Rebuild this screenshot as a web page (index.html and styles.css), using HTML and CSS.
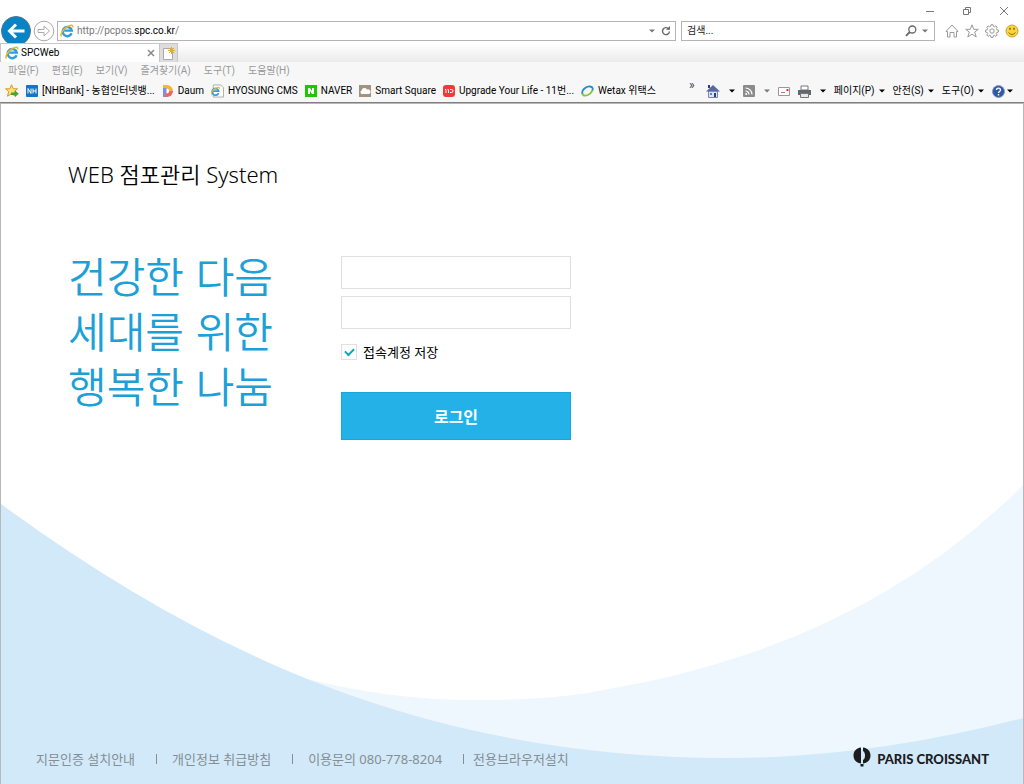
FILE: index.html
```html
<!DOCTYPE html>
<html lang="ko">
<head>
<meta charset="utf-8">
<title>SPCWeb</title>
<link rel="stylesheet" href="styles.css">
</head>
<body>
<svg class="defs" aria-hidden="true">
  <symbol id="ie" viewBox="0 0 14 14">
    <path d="M11.6 9.2A4.6 4.6 0 1 1 11.8 6.6H4.2" fill="none" stroke="#2f9fdc" stroke-width="2.4"/>
    <path d="M1.6 12.6C-.6 10.2 4 4.2 8.2 2.1c3.2-1.600 5-1.200 4.400 1.400" fill="none" stroke="#f2b71f" stroke-width="1.500"/>
  </symbol>
  <symbol id="caret" viewBox="0 0 6 4"><path d="M0 .5h6L3 3.500z" fill="currentColor"/></symbol>
</svg>

<header class="browser">
  <div class="titlebar">
    <button class="plain" aria-label="최소화"><svg width="10" height="10"><path d="M1 5.500h8" stroke="#777"/></svg></button>
    <button class="plain" aria-label="이전 크기로"><svg width="10" height="10" fill="none" stroke="#777"><path d="M1.500 3.500h5v5h-5zM3.500 3.500v-2h5v5h-2"/></svg></button>
    <button class="plain" aria-label="닫기"><svg width="10" height="10"><path d="M1 1l8 8M9 1l-8 8" stroke="#777"/></svg></button>
  </div>
  <div class="navrow">
    <button class="plain back" aria-label="뒤로"><svg width="30" height="30" viewBox="0 0 30 30"><circle cx="15" cy="15" r="14.500" fill="#0783c6" stroke="#55748a"/><path d="M23.500 15H9M15 8.500L8.500 15l6.500 6.500" fill="none" stroke="#fff" stroke-width="3"/></svg></button>
    <button class="plain" aria-label="앞으로"><svg width="22" height="22" viewBox="0 0 22 22" fill="#fff" stroke="#aaa"><circle cx="11" cy="11" r="9.800"/><path d="M5 9.500h6V6l5.500 5-5.500 5v-3.500H5z"/></svg></button>
    <div class="address">
      <svg width="14" height="14"><use href="#ie"/></svg>
      <span class="url">http://pcpos.<b>spc.co.kr</b>/</span>
      <button class="plain dim" aria-label="주소 목록"><svg width="6" height="4"><use href="#caret"/></svg></button>
      <button class="plain" aria-label="새로 고침"><svg width="10" height="10" viewBox="0 0 10 10"><path d="M7.800 3A3.500 3.500 0 1 0 8.500 5.500" fill="none" stroke="#666" stroke-width="1.400"/><path d="M5 3.800h4V0z" fill="#666"/></svg></button>
    </div>
    <div class="search">
      <input type="text" aria-label="검색" placeholder="검색...">
      <button class="plain" aria-label="찾기"><svg width="12" height="12" viewBox="0 0 12 12" fill="none" stroke="#666"><circle cx="7.300" cy="4.500" r="3.500" stroke-width="1.300"/><path d="M4.800 7L1 10.800" stroke-width="1.800"/></svg></button>
      <button class="plain dim" aria-label="검색 옵션"><svg width="6" height="4"><use href="#caret"/></svg></button>
    </div>
    <div class="tools">
      <button class="plain" aria-label="홈"><svg width="14" height="14" viewBox="0 0 14 14" fill="none" stroke="#999"><path d="M1 7.500L7 1l6 6.500h-1.500V13H9V8.500H5V13H2.500V7.500z"/></svg></button>
      <button class="plain" aria-label="즐겨찾기"><svg width="14" height="14" viewBox="0 0 14 14" fill="none" stroke="#999"><path d="M7 .8l1.700 4.500h4.600L9.700 8.100l1.500 4.900L7 10.200 2.800 13l1.500-4.900L.7 5.300h4.600z"/></svg></button>
      <button class="plain" aria-label="설정"><svg width="14" height="14" viewBox="0 0 14 14" fill="none" stroke="#999"><path d="M6 .7h2l.4 1.700 1 .4 1.500-.9 1.300 1.300-.9 1.500.4 1 1.700.4v2l-1.700.4-.4 1 .9 1.500-1.300 1.300-1.500-.9-1 .4-.4 1.600H6l-.4-1.600-1-.4-1.500.9L1.800 11l.9-1.500-.4-1L.6 8.100v-2l1.700-.4.4-1-.9-1.500 1.300-1.300 1.500.9 1-.4z"/><circle cx="7" cy="7" r="2.200"/></svg></button>
      <button class="plain" aria-label="의견 보내기"><svg width="14" height="14" viewBox="0 0 14 14"><circle cx="7" cy="7" r="6" fill="#fbd43c" stroke="#c9a43a"/><path d="M5 3.800v2M9 3.800v2" stroke="#655018" stroke-width="1.300"/><path d="M3.500 8.500q3.500 4 7 0" fill="none" stroke="#8a6c18"/></svg></button>
    </div>
  </div>
  <div class="tabs">
    <div class="tab">
      <svg width="14" height="14"><use href="#ie"/></svg>
      <span>SPCWeb</span>
      <button class="plain" aria-label="탭 닫기"><svg width="8" height="8"><path d="M1 1l6 6M7 1L1 7" stroke="#888" stroke-width="1.500"/></svg></button>
    </div>
    <button class="plain newtab" aria-label="새 탭"><svg width="13" height="13" viewBox="0 0 13 13"><path d="M1.500 1.500h9v11h-9z" fill="#fff" stroke="#aaa"/><path d="M9.500 0v7M6 3.500h7M7 1l5 5M12 1L7 6" stroke="#eda52c"/></svg></button>
  </div>
  <nav class="menu" aria-label="메뉴">
    <button class="plain">파일(F)</button><button class="plain">편집(E)</button><button class="plain">보기(V)</button><button class="plain">즐겨찾기(A)</button><button class="plain">도구(T)</button><button class="plain">도움말(H)</button>
  </nav>
  <div class="bar">
    <nav class="favorites" aria-label="즐겨찾기 모음">
      <button class="plain" aria-label="즐겨찾기에 추가"><svg width="14" height="14" viewBox="0 0 14 14"><path d="M6.500.8l1.800 4h4.200L9.300 7.600l1.200 4.600-4-2.400-4 2.400 1.200-4.600L.6 4.800h4.200z" fill="#ffe27a" stroke="#d29a21"/><path d="M6 8.500h4V6.500l3.800 3.300-3.800 3.300v-2H6z" fill="#48a52b"/></svg></button>
      <a href="#"><svg width="12" height="12" viewBox="0 0 12 12"><rect width="12" height="12" rx="1" fill="#1574c4"/><path d="M2 8.500v-5l3 5v-5M7 3.500v5M10 3.500v5M7 6h3" fill="none" stroke="#fff"/></svg>[NHBank] - 농협인터넷뱅...</a>
      <a href="#"><svg width="12" height="12" viewBox="0 0 12 12"><path d="M1 0h4v12H1z" fill="#7b8cf2"/><path d="M5 0a6 6 0 0 1 6 6H7.500L4 3H1V0z" fill="#f4b63a"/><path d="M11 6a6 6 0 0 1-6 6H3V9l4.500-3z" fill="#f0655c"/><path d="M4.500 3.500a2.500 2.500 0 0 1 0 5z" fill="#fff"/></svg>Daum</a>
      <a href="#"><svg width="13" height="14" viewBox="0 0 14 14"><path d="M2.500.5h8l3 3v10h-11z" fill="#fff" stroke="#aaa"/><use href="#ie" x="-1" y="2" width="11" height="11"/></svg>HYOSUNG CMS</a>
      <a href="#"><svg width="12" height="12" viewBox="0 0 12 12"><path d="M0 0h12v12H0z" fill="#1ec800"/><path d="M3 9V3h2l2 3V3h2v6H7L5 6v3z" fill="#fff"/></svg>NAVER</a>
      <a href="#"><svg width="12" height="12" viewBox="0 0 12 12"><path d="M0 0h12v12H0z" fill="#a0937f"/><path d="M2.500 9a2 2 0 0 1 0-3.500 3 3 0 0 1 5.500-1 2.300 2.300 0 0 1 2 4.500z" fill="#fff"/></svg>Smart Square</a>
      <a href="#"><svg width="12" height="12" viewBox="0 0 12 12"><rect width="12" height="12" rx="3" fill="#ee3b38"/><path d="M2 4.500h1V8M4.500 4.500h1V8M7 4.500h1.500a1.500 1.500 0 0 1 0 3H7" fill="none" stroke="#fff"/></svg>Upgrade Your Life - 11번...</a>
      <a href="#"><svg width="13" height="12" viewBox="0 0 13 12" fill="none" stroke-width="1.800"><path d="M1.500 9C0 5.500 5 1 9 1.500c3.500.5 3 3 2 4.500" stroke="#238dcd"/><path d="M1.500 8.500c.5 3 5 2.500 7.500.2 1.500-1.300 2.300-2.700 2.500-3.700" stroke="#8bc53f"/></svg>Wetax 위택스</a>
    </nav>
    <button class="plain more" aria-label="더 보기">»</button>
    <div class="commands">
      <button class="plain" aria-label="홈 페이지"><svg width="14" height="14" viewBox="0 0 14 14"><path d="M2.500 7h9v6.500h-9z" fill="#dfe3f0" stroke="#7b86ae"/><path d="M0 7.500L7 1l7 6.500z" fill="#5969a2"/><path d="M2 1h2v3H2z" fill="#2938a0"/><path d="M8 9h2v4H8z" fill="#28427e"/><path d="M4 9h2v2H4z" fill="#4f88c4"/></svg><svg class="caret" width="6" height="4"><use href="#caret"/></svg></button>
      <button class="plain dim" aria-label="피드"><svg width="12" height="12" viewBox="0 0 12 12"><rect width="12" height="12" rx="1" fill="#8b8b8b"/><path d="M2.500 6a3.500 3.500 0 0 1 3.500 3.500M2.500 3A6.500 6.500 0 0 1 9 9.500" fill="none" stroke="#fff" stroke-width="1.200"/><circle cx="3.200" cy="9" r="1" fill="#fff"/></svg><svg class="caret" width="6" height="4"><use href="#caret"/></svg></button>
      <button class="plain" aria-label="메일 읽기"><svg width="12" height="9" viewBox="0 0 12 9"><path d="M.5.500h11v8H.5z" fill="#fff" stroke="#999"/><path d="M8.500 2h2v2h-2z" fill="#d33"/><path d="M3 5.500h4" stroke="#c77"/></svg></button>
      <button class="plain" aria-label="인쇄"><svg width="13" height="13" viewBox="0 0 13 13"><path d="M3 1h7v4H3z" fill="#fff" stroke="#777"/><path d="M0 5h13v5H0z" fill="#646669"/><path d="M2.500 8.500h8v4h-8z" fill="#e5e8ee" stroke="#777"/></svg><svg class="caret" width="6" height="4"><use href="#caret"/></svg></button>
      <button class="plain">페이지(P)<svg width="6" height="4"><use href="#caret"/></svg></button>
      <button class="plain">안전(S)<svg width="6" height="4"><use href="#caret"/></svg></button>
      <button class="plain">도구(O)<svg width="6" height="4"><use href="#caret"/></svg></button>
      <button class="plain help" aria-label="도움말"><svg width="13" height="13" viewBox="0 0 13 13"><circle cx="6.500" cy="6.500" r="6" fill="#3157ad" stroke="#8a9ac2"/><path d="M4.500 5c0-2.500 4-2.500 4 0 0 1.500-2 1.400-2 3M6.500 9v1.500" fill="none" stroke="#fff" stroke-width="1.400"/></svg><svg width="6" height="4"><use href="#caret"/></svg></button>
    </div>
  </div>
</header>

<div class="page">
  <svg class="waves" viewBox="0 484 1024 300" preserveAspectRatio="none" aria-hidden="true">
    <path d="M300 684L307 679Q391 700 475 700T609 689Q680 677 745 655Q908 601 1024 485V784H300z" fill="#eff7fe"/>
    <path d="M0 504Q157 619 307 679Q504 758 728 758Q870 758 1024 718V784H0z" fill="#d2e9f9"/>
  </svg>
  <main class="content">
    <h1>WEB 점포관리 System</h1>
    <div class="columns">
      <p class="slogan">건강한 다음<br>세대를 위한<br>행복한 나눔</p>
      <form class="login">
        <input class="field" type="text" aria-label="아이디">
        <input class="field" type="password" aria-label="비밀번호">
        <label class="remember"><input type="checkbox" checked>접속계정 저장</label>
        <button class="submit" type="button">로그인</button>
      </form>
    </div>
  </main>
  <footer class="footer">
    <nav class="links" aria-label="안내">
      <a href="#">지문인증 설치안내</a>
      <a href="#">개인정보 취급방침</a>
      <a href="#">이용문의 080-778-8204</a>
      <a href="#">전용브라우저설치</a>
    </nav>
    <div class="brand">
      <svg width="18" height="20" viewBox="0 0 18 20"><path d="M8 .5v16C3 16 .5 12.500 .5 8.500S3 1 8 .5zM10 .5c5 .5 7.500 4 7.500 8s-2.500 7.500-7.500 8v-3.500c1.500-1 2-2.500 2-4.500s-.5-3.500-2-4.500z" fill="#1c1c1e"/><path d="M7.500 17h3v2.500h-3z" fill="#1c1c1e"/></svg>
      <span>PARIS CROISSANT</span>
    </div>
  </footer>
</div>
</body>
</html>
```
FILE: styles.css
```css
* { box-sizing: border-box; }

body {
  margin: 0;
  min-height: 100vh;
  display: flex;
  flex-direction: column;
  background: #fff;
  color: #000;
  font-family: "Noto Sans", "Noto Sans CJK KR", sans-serif;
}

svg { display: block; flex: none; }
.defs { position: absolute; width: 0; height: 0; }
a { color: inherit; text-decoration: none; }

.plain {
  display: flex;
  align-items: center;
  padding: 0;
  border: 0;
  background: none;
  color: inherit;
  font: inherit;
  white-space: nowrap;
}

.browser {
  font-family: Roboto, "Noto Sans CJK KR", sans-serif;
  font-size: 10px;
  line-height: 16px;
  border-bottom: 1px solid #808080;
}

.titlebar {
  height: 19px;
  padding: 6px 15px 0 0;
  display: flex;
  align-items: flex-start;
  justify-content: flex-end;
  gap: 27px;
}

.navrow {
  height: 24px;
  display: flex;
  align-items: center;
  padding-right: 5px;
}
.navrow > .plain { margin-right: 2px; }
.navrow > .back { margin: 0 2px 0 1px; }
.dim { color: #777; }

.address, .search {
  height: 20px;
  display: flex;
  align-items: center;
  border: 1px solid #b4b4b4;
  background: #fff;
}
.address { flex: 1; padding: 0 4px 0 2px; gap: 6px; }
.url { flex: 1; margin-left: -3px; color: #777; }
.url b { color: #000; font-weight: 400; }
.search { width: 254px; margin: 0 10px 0 5px; padding: 0 6px 0 5px; gap: 5px; }
.search input {
  flex: 1;
  min-width: 0;
  padding: 0;
  border: 0;
  font: inherit;
}
.search input::placeholder { color: #222; opacity: 1; }
.tools { display: flex; gap: 6px; }

.tabs {
  height: 19px;
  display: flex;
  background: linear-gradient(#fff, #ebebeb);
}
.tab {
  width: 160px;
  padding: 0 4px;
  display: flex;
  align-items: center;
  gap: 2px;
  border: 1px solid #c6c6c6;
  border-width: 1px 1px 0;
  background: #fff;
}
.tab span { flex: 1; }
.newtab {
  width: 18px;
  justify-content: center;
  background: #dcdcdc;
  border: 1px solid #c6c6c6;
  border-width: 1px 1px 0 0;
}

.menu {
  height: 18px;
  padding-left: 8px;
  display: flex;
  gap: 13px;
  background: #f7f7f7;
  color: #999;
}

.bar {
  height: 22px;
  padding: 0 11px 0 5px;
  display: flex;
  align-items: center;
  background: #f7f7f7;
}
.favorites { flex: 1; display: flex; gap: 7px; }
.favorites a { display: flex; align-items: center; gap: 4px; white-space: nowrap; }
.more { margin-right: 11px; padding-bottom: 12px; color: #335; font-size: 12px; }
.commands { display: flex; gap: 8px; }
.commands .plain { gap: 4px; }
.commands .caret { margin-left: 5px; }
.commands .help { gap: 2px; }

.page {
  position: relative;
  flex: 1;
  display: flex;
  flex-direction: column;
  justify-content: space-between;
  border: 1px solid #b8b8b8;
  border-bottom: 0;
}
.waves {
  position: absolute;
  left: 0;
  bottom: 0;
  width: 100%;
  height: 300px;
}
.content, .footer { position: relative; }

.content { padding: 54px 67px 0; }
h1 {
  margin: 0;
  font-size: 22px;
  line-height: 32px;
  font-weight: 350;
}
.columns {
  display: grid;
  grid-template-columns: 273px 230px;
  margin-top: 57px;
}
.slogan {
  margin: 0;
  color: #1ba0d8;
  font-family: "Noto Sans CJK KR", sans-serif;
  font-size: 42px;
  line-height: 55px;
  font-weight: 350;
}
.login { display: flex; flex-direction: column; padding-top: 9px; }
.field {
  height: 33px;
  margin-bottom: 7px;
  padding: 0 8px;
  border: 1px solid #e0e0e0;
  background: #fff;
}
.remember {
  display: flex;
  align-items: center;
  gap: 6px;
  margin-top: 7px;
  font-size: 13px;
  line-height: 18px;
}
.remember input {
  appearance: none;
  width: 16px;
  height: 16px;
  margin: 0;
  border: 1px solid #e0e0e0;
  background: #fff;
  display: grid;
  place-items: center;
}
.remember input:checked::before {
  content: "";
  width: 7px;
  height: 4px;
  margin-bottom: 3px;
  border: solid #0da5ba;
  border-width: 0 0 2px 2px;
  rotate: -45deg;
}
.submit {
  height: 48px;
  margin-top: 31px;
  border: 1px solid #17a6e0;
  background: #23b1e8;
  color: #fff;
  font: 700 16px "Noto Sans CJK KR", sans-serif;
}

.footer {
  display: flex;
  justify-content: space-between;
  align-items: center;
  padding: 0 34px 15px 35px;
}
.links { display: flex; color: #858e94; font-size: 13px; line-height: 20px; }
.links a { display: flex; align-items: center; }
.links a + a::before {
  content: "";
  width: 1px;
  height: 10px;
  margin: 0 15px 0 21px;
  background: #858e94;
}
.links a:last-child::before { margin: 0 9px 0 21px; }
.brand {
  display: flex;
  align-items: center;
  gap: 6px;
  color: #1c1c1e;
  font: 900 13px/16px "Lato", sans-serif;
}
.brand svg { margin-top: -4px; }
```
